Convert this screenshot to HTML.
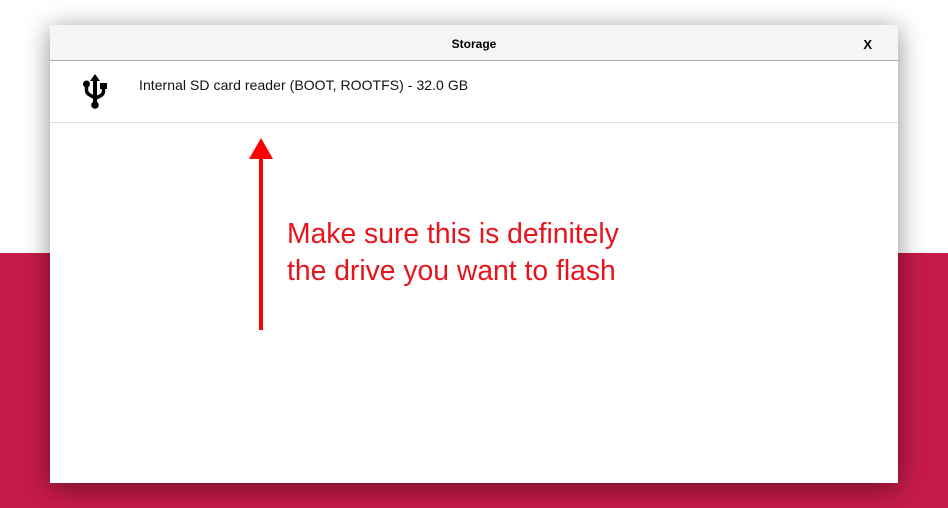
<!DOCTYPE html>
<html><head><meta charset="utf-8"><style>
html,body{margin:0;padding:0;width:948px;height:508px;overflow:hidden;font-family:"Liberation Sans",sans-serif;}
body{background:linear-gradient(#fff 0,#fff 253px,#c51a4a 253px);position:relative;}
.dlg{position:absolute;left:50px;top:25px;width:848px;height:458px;background:#fff;box-shadow:0 4px 24px rgba(0,0,0,0.45);}
.hdr{height:35px;background:#f5f5f5;border-bottom:1px solid #aaa;position:relative;}
.hdr .t{position:absolute;left:0;right:0;top:12px;text-align:center;font-size:12px;font-weight:bold;color:#000;}
.hdr .x{position:absolute;right:26px;top:12px;font-size:13px;font-weight:bold;}
.row{height:61px;border-bottom:1px solid #ddd;position:relative;}
.row .l{position:absolute;left:89px;top:16px;font-size:14px;color:#111;letter-spacing:0.05px;}
.msg{position:absolute;left:287px;top:215px;font-size:28.3px;line-height:37px;color:#e8141c;}
</style></head><body>
<div class="dlg">
<div class="hdr"><div class="t">Storage</div><div class="x">X</div></div>
<div class="row">
<svg style="position:absolute;left:32px;top:13px" width="26" height="36" viewBox="0 0 26 36">
<polygon points="13,0 18,7 15,7 15,26 11,26 11,7 8,7" fill="#000"/>
<path d="M4.5 10 V16 Q4.5 19.5 8 21 L13 24" stroke="#000" stroke-width="3.5" fill="none"/>
<path d="M21.5 12 V17 Q21.5 20.5 18 22 L13 24.5" stroke="#000" stroke-width="3.5" fill="none"/>
<circle cx="4.5" cy="10" r="3.5" fill="#000"/>
<rect x="18" y="9" width="7" height="6" fill="#000"/>
<rect x="11" y="20" width="4" height="10" fill="#000"/>
<circle cx="13" cy="31" r="3.8" fill="#000"/>
</svg>
<div class="l">Internal SD card reader (BOOT, ROOTFS) - 32.0 GB</div>
</div>
</div>
<svg style="position:absolute;left:0;top:0" width="948" height="508">
<polygon points="261,138 273,159 249,159" fill="#f00"/>
<rect x="259" y="158" width="4" height="172" fill="#f00"/>
</svg>
<div class="msg">Make sure this is definitely<br>the drive you want to flash</div>
</body></html>
